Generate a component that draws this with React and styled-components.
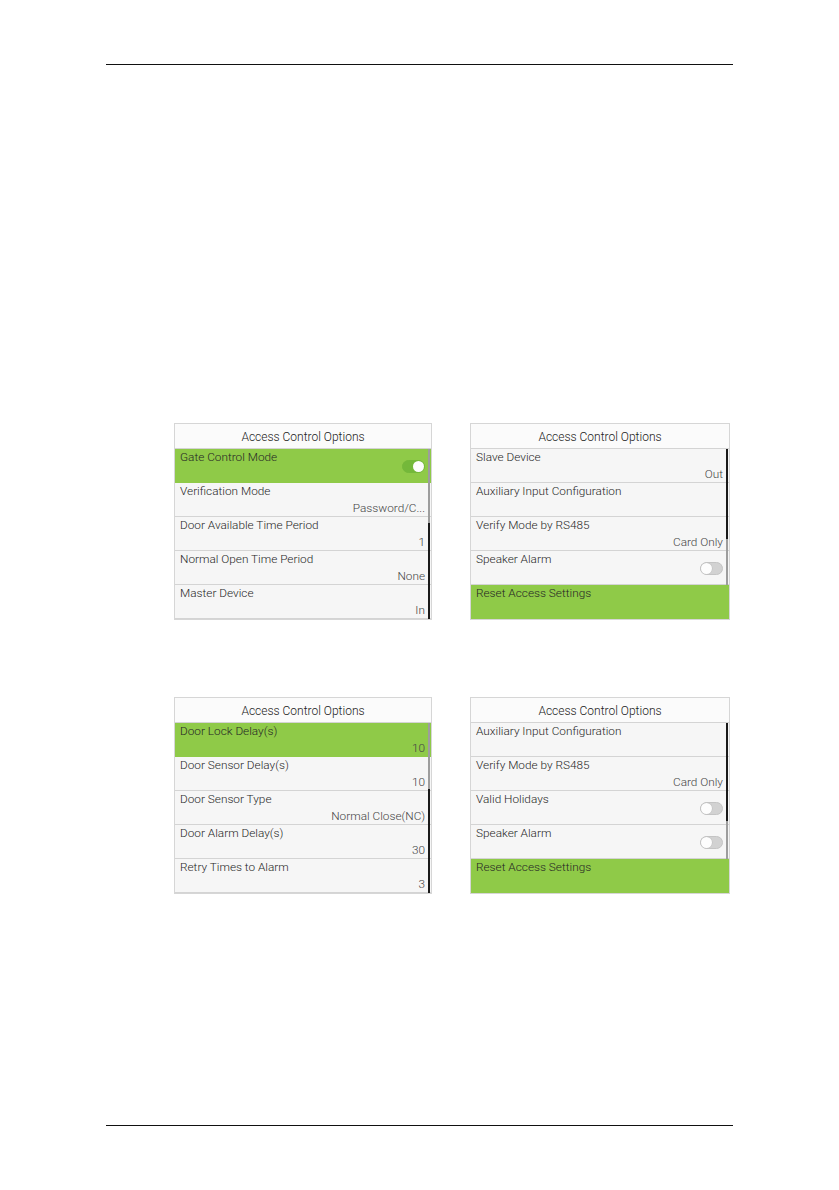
import styled, { createGlobalStyle } from 'styled-components';

const GlobalStyle = createGlobalStyle`
  html, body {
    margin: 0;
    padding: 0;
    background: #ffffff;
  }
`;

const screens = [
  {
    scroll: { track: [0, 170], thumb: [74, 170] },
    rows: [
      { label: 'Gate Control Mode', toggle: 'on', active: true },
      { label: 'Verification Mode', value: 'Password/C...' },
      { label: 'Door Available Time Period', value: '1' },
      { label: 'Normal Open Time Period', value: 'None' },
      { label: 'Master Device', value: 'In' },
    ],
  },
  {
    scroll: { track: [0, 136], thumb: [0, 90] },
    rows: [
      { label: 'Slave Device', value: 'Out' },
      { label: 'Auxiliary Input Configuration' },
      { label: 'Verify Mode by RS485', value: 'Card Only' },
      { label: 'Speaker Alarm', toggle: 'off' },
      { label: 'Reset Access Settings', active: true },
    ],
  },
  {
    scroll: { track: [0, 170], thumb: [66, 170] },
    rows: [
      { label: 'Door Lock Delay(s)', value: '10', active: true },
      { label: 'Door Sensor Delay(s)', value: '10' },
      { label: 'Door Sensor Type', value: 'Normal Close(NC)' },
      { label: 'Door Alarm Delay(s)', value: '30' },
      { label: 'Retry Times to Alarm', value: '3' },
    ],
  },
  {
    scroll: { track: [0, 136], thumb: [0, 98] },
    rows: [
      { label: 'Auxiliary Input Configuration' },
      { label: 'Verify Mode by RS485', value: 'Card Only' },
      { label: 'Valid Holidays', toggle: 'off' },
      { label: 'Speaker Alarm', toggle: 'off' },
      { label: 'Reset Access Settings', active: true },
    ],
  },
];

const App = () => {
  return (
    <Page>
      <GlobalStyle />
      <Rule />
      <ScreenGrid>
        {screens.map((screen, i) => (
          <Screen key={i}>
            <ScreenTitle>Access Control Options</ScreenTitle>
            <List>
              {screen.rows.map((row, j) => (
                <Row key={j} $active={row.active}>
                  <Label>{row.label}</Label>
                  {row.toggle ? (
                    <Switch $on={row.toggle === 'on'}>
                      <Knob $on={row.toggle === 'on'} />
                    </Switch>
                  ) : (
                    <Value>{row.value || '\u00a0'}</Value>
                  )}
                </Row>
              ))}
              <Track $top={screen.scroll.track[0]} $bottom={screen.scroll.track[1]} />
              <Thumb $top={screen.scroll.thumb[0]} $bottom={screen.scroll.thumb[1]} />
            </List>
          </Screen>
        ))}
      </ScreenGrid>
      <FooterRule />
    </Page>
  );
};

export default App;

const Page = styled.div`
  box-sizing: border-box;
  width: 839px;
  height: 1190px;
  padding: 64px 106px 64px 106px;
  display: flex;
  flex-direction: column;
  font-family: Roboto, 'Liberation Sans', sans-serif;
  font-weight: 300;
`;

const Rule = styled.div`
  border-top: 1px solid #111;
`;

const FooterRule = styled.div`
  margin-top: auto;
  border-top: 1px solid #111;
`;

const ScreenGrid = styled.div`
  margin-top: 358px;
  padding-left: 68px;
  display: grid;
  grid-template-columns: 258px 260px;
  column-gap: 38px;
  row-gap: 77px;
`;

const Screen = styled.div`
  border: 1px solid #d6d6d6;
  background: #f6f6f6;
`;

const ScreenTitle = styled.div`
  height: 24px;
  line-height: 26px;
  text-align: center;
  font-size: 12px;
  color: #222;
  background: #fbfbfb;
  border-bottom: 1px solid #d4d4d4;
`;

const List = styled.div`
  position: relative;
`;

const Row = styled.div`
  box-sizing: border-box;
  height: 34px;
  padding: 0 6px 0 5px;
  display: flex;
  flex-direction: column;
  background: ${(p) => (p.$active ? '#8fca48' : 'transparent')};
  border-bottom: 1px solid ${(p) => (p.$active ? '#8fca48' : '#d4d4d4')};

  &:last-child {
    border-bottom: none;
  }
`;

const Label = styled.div`
  font-size: 11.8px;
  line-height: 16px;
  color: #262626;
  white-space: nowrap;
`;

const Value = styled.div`
  font-size: 11.8px;
  line-height: 18px;
  color: #444;
  text-align: right;
  white-space: nowrap;
`;

const Switch = styled.div`
  align-self: flex-end;
  margin-top: -5px;
  box-sizing: border-box;
  width: 23px;
  height: 13px;
  border-radius: 7px;
  position: relative;
  background: ${(p) => (p.$on ? '#74b83a' : '#d2d2d2')};
  border: 1px solid ${(p) => (p.$on ? '#74b83a' : '#c4c4c4')};
`;

const Knob = styled.div`
  position: absolute;
  top: 0;
  ${(p) => (p.$on ? 'right: 0;' : 'left: 0;')}
  width: 11px;
  height: 11px;
  border-radius: 50%;
  background: #fdfdfd;
  box-shadow: ${(p) => (p.$on ? 'none' : '0 0 0 0.5px #bdbdbd')};
`;

const Track = styled.div`
  position: absolute;
  right: 1px;
  width: 2px;
  top: ${(p) => p.$top}px;
  height: ${(p) => p.$bottom - p.$top}px;
  background: #9d9d9d;
`;

const Thumb = styled.div`
  position: absolute;
  right: 1px;
  width: 2px;
  top: ${(p) => p.$top}px;
  height: ${(p) => p.$bottom - p.$top}px;
  background: #1a1a1a;
`;
